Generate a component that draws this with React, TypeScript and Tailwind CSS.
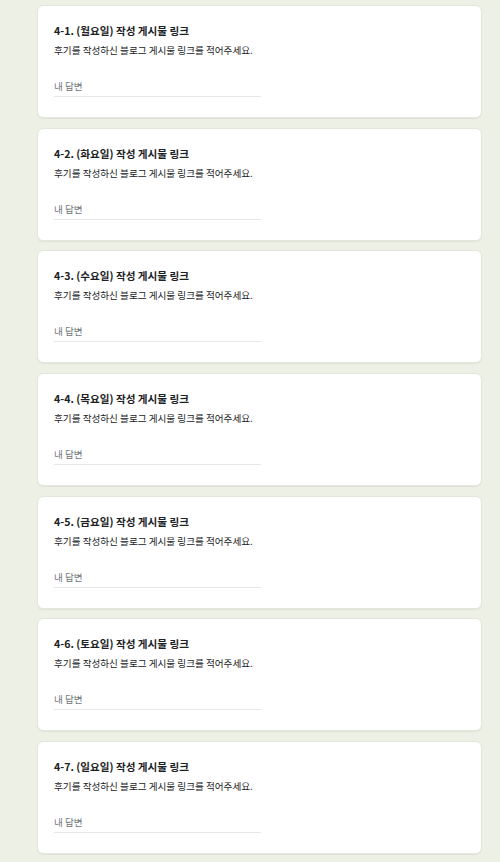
const days = ["월", "화", "수", "목", "금", "토", "일"];

function QuestionCard({ index, day }: { index: number; day: string }) {
  return (
    <div className="h-[113px] rounded-[6px] border border-[#e3e6da] bg-white px-[16px] pt-[17px] shadow-[0_1px_1px_rgba(0,0,0,0.06)]">
      <div className="text-[10.6px] leading-[16px] font-bold text-[#202124]">
        4-{index}. ({day}요일) 작성 게시물 링크
      </div>
      <div className="mt-[3px] text-[9.6px] leading-[16px] text-[#202124]">
        후기를 작성하신 블로그 게시물 링크를 적어주세요.
      </div>
      <div className="mt-[20px] w-[207px] border-b border-[#e6e6e6] pb-[2px] text-[9.6px] leading-[16px] text-[#70757a]">
        내 답변
      </div>
    </div>
  );
}

export default function App() {
  return (
    <div
      className="min-h-[862px] bg-[#edf0e4]"
      style={{ fontFamily: '"Noto Sans CJK KR", "Noto Sans", Roboto, sans-serif' }}
    >
      <div className="flex flex-col gap-[9.67px] pt-[5px] pl-[37px] pr-[18px]">
        {days.map((day, i) => (
          <QuestionCard key={day} index={i + 1} day={day} />
        ))}
      </div>
    </div>
  );
}
